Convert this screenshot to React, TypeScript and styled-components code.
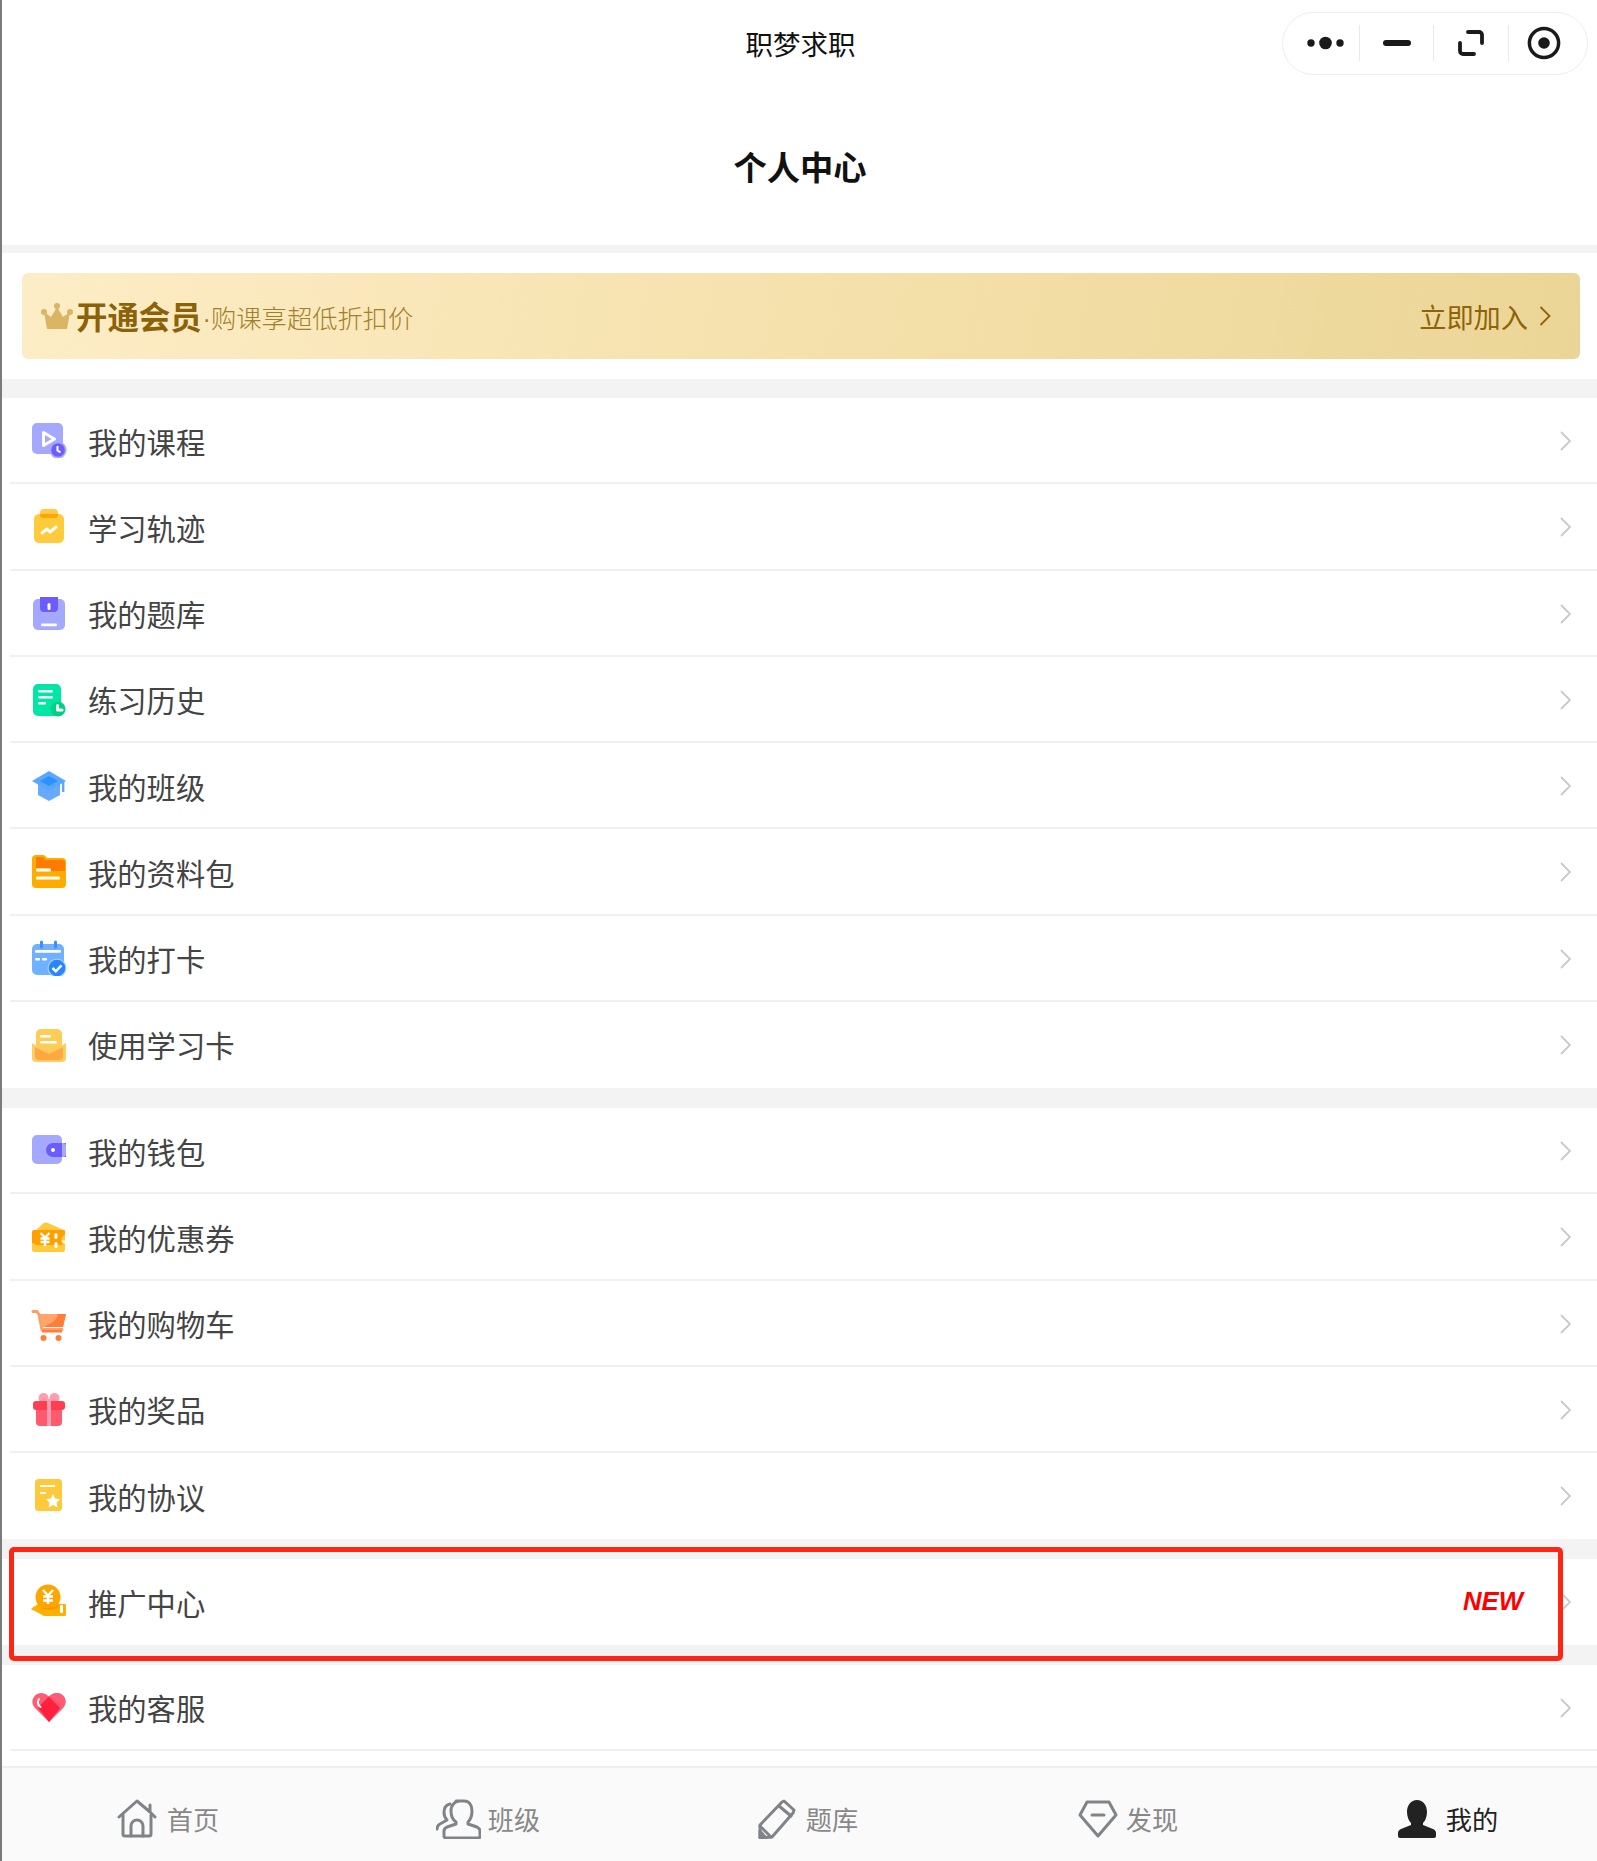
import React from "react";
import styled, { createGlobalStyle } from "styled-components";

const Global = createGlobalStyle`
  html, body { margin: 0; padding: 0; background: #fff; }
  * { box-sizing: border-box; }
`;

const Page = styled.div`
  position: relative;
  width: 1597px;
  height: 1861px;
  overflow: hidden;
  border-left: 2px solid #7b7b7b;
  background: #fff;
  font-family: "Noto Sans CJK SC", "Noto Sans", sans-serif;
  display: flex;
  flex-direction: column;
`;

const NavBar = styled.header`
  height: 86px;
  display: grid;
  grid-template-columns: 1fr auto 1fr;
  align-items: center;
`;

const NavTitle = styled.div`
  font-size: 27.5px;
  line-height: 40px;
  margin: 0 0 1px 2px;
  color: #111;
`;

const Capsule = styled.div`
  justify-self: end;
  margin: 0 9px 0 0;
  width: 306px;
  height: 63px;
  border: 1px solid #eee;
  border-radius: 32px;
  display: grid;
  grid-template-columns: 77px 74px 75px 1fr;
  align-items: center;
  background: #fff;
`;

const CapsuleCell = styled.div<{ $divider?: boolean; $pl?: number; $pr?: number }>`
  height: 36px;
  padding: 0 ${(p) => p.$pr ?? 0}px 0 ${(p) => p.$pl ?? 0}px;
  display: flex;
  align-items: center;
  justify-content: center;
  border-right: ${(p) => (p.$divider ? "1px solid #e9e9e9" : "none")};
`;

const PageTitle = styled.h1`
  margin: 0;
  height: 159px;
  padding-left: 1px;
  display: flex;
  align-items: center;
  justify-content: center;
  font-size: 33.3px;
  font-weight: 700;
  color: #111;
`;

const Band = styled.div<{ $h: number }>`
  height: ${(p) => p.$h}px;
  background: #f3f3f3;
  flex: none;
`;

const BannerWrap = styled.section`
  height: 126px;
  padding: 20px 17px 20px 20px;
`;

const Banner = styled.div`
  height: 86px;
  border-radius: 6px;
  background: linear-gradient(100deg, #fdedc6 0%, #f5e1ac 50%, #ebd596 100%);
  display: flex;
  align-items: center;
  padding: 0 29px 0 19px;
  color: #8d6407;
`;

const BannerStrong = styled.strong`
  margin: -2px 0 0 3px;
  font-size: 31.4px;
  font-weight: 700;
  color: #8b6208;
`;

const BannerSub = styled.span`
  flex: 1;
  margin-top: 1px;
  font-size: 25.3px;
  font-weight: 300;
  color: #a27f28;
`;

const BannerDot = styled.span`
  font-family: "Liberation Sans", Arial, sans-serif;
  margin: 0 0 0 1px;
`;

const BannerAction = styled.span`
  font-size: 27.2px;
  margin-right: 11px;
  color: #8d6407;
`;

const List = styled.section`
  flex: none;
`;

const Row = styled.div<{ $h?: number; $plain?: boolean }>`
  height: ${(p) => p.$h ?? 86.25}px;
  margin-left: 8px;
  padding: 0 26px 0 21px;
  display: flex;
  align-items: center;
  border-bottom: 2px solid ${(p) => (p.$plain ? "transparent" : "#f0f0f0")};
`;

const RowIcon = styled.span`
  width: 36px;
  height: 36px;
  flex: none;
  display: block;
  svg { display: block; }
`;

const RowLabel = styled.span`
  flex: 1;
  margin-left: 21px;
  font-size: 29.3px;
  line-height: 44px;
  color: #444;
  margin-top: 1px;
`;

const NewTag = styled.span`
  margin-right: 37px;
  font-family: "Liberation Sans", Arial, sans-serif;
  font-size: 25.7px;
  font-weight: 700;
  font-style: italic;
  color: #f00;
`;

const RowChevron = styled.span`
  display: block;
  margin-top: 2px;
  svg { display: block; }
`;

const Spacer = styled.div`
  height: 15.5px;
  flex: none;
`;

const TabBar = styled.nav`
  flex: 1;
  border-top: 2px solid #eee;
  background: #fafafa;
  display: grid;
  grid-template-columns: repeat(5, 320px);
  padding-left: 6px;
  align-items: center;
`;

const Tab = styled.div<{ $active?: boolean; $gap?: number }>`
  display: flex;
  align-items: center;
  justify-content: center;
  gap: ${(p) => p.$gap ?? 10}px;
  margin-top: 8px;
  font-size: 26.2px;
  line-height: 38px;
  color: ${(p) => (p.$active ? "#222" : "#888")};
  svg { display: block; }
`;

const Annotation = styled.div`
  position: absolute;
  left: 7px;
  top: 1547px;
  width: 1554px;
  height: 114px;
  border: 5px solid #ff2414;
  border-radius: 5px;
  pointer-events: none;
`;

const Chevron = ({ color = "#c9c9c9", w = 11, h = 20 }: { color?: string; w?: number; h?: number }) => (
  <svg width={w} height={h} viewBox="0 0 11 20" fill="none">
    <path d="M1 1l9 9-9 9" stroke={color} strokeWidth="1.8" />
  </svg>
);

const I = ({ children }: { children: React.ReactNode }) => (
  <svg width="36" height="36" viewBox="0 0 36 36" fill="none">{children}</svg>
);

const P = "#a5a8ff";
const V = "#6c5cff";

const icons: Record<string, React.ReactNode> = {
  course: (
    <I>
      <rect x="1" y="1" width="31" height="31" rx="5" fill={P} />
      <path d="M12.500 10.500v13l11-6.500z" stroke="#fff" strokeWidth="3" strokeLinejoin="round" />
      <circle cx="27" cy="28" r="8.600" fill={P} />
      <circle cx="27" cy="28" r="6.800" fill={V} />
      <path d="M26.500 24v4.500l3 1.800" stroke="#fff" strokeWidth="2" />
    </I>
  ),
  track: (
    <I>
      <rect x="3" y="6" width="30" height="29" rx="5" fill="#ffcb3d" />
      <path d="M9 5a4 4 0 0 1 4-4h10a4 4 0 0 1 4 4v1H9z" fill="#ffc94a" />
      <path d="M9 6h18v1a3 3 0 0 1-3 3H12a3 3 0 0 1-3-3z" fill="#ffa600" />
      <path d="M11 25l5-4 3 3 6-5" stroke="#fff" strokeWidth="3" strokeLinejoin="round" strokeLinecap="round" />
    </I>
  ),
  bank: (
    <I>
      <rect x="2" y="4" width="32" height="31" rx="5" fill={P} />
      <path d="M9 2h18v11a4 4 0 0 1-4 4H13a4 4 0 0 1-4-4z" fill={V} />
      <rect x="16.500" y="8" width="3" height="7" rx="1.500" fill="#fff" />
      <rect x="10" y="28.500" width="16" height="2.800" rx="1.200" fill="#fff" />
    </I>
  ),
  history: (
    <I>
      <rect x="2" y="3" width="28" height="32" rx="5" fill="#00e6a5" />
      <rect x="7" y="9" width="15" height="2.600" rx="1.300" fill="#fff" />
      <rect x="7" y="15" width="15" height="2.600" rx="1.300" fill="#fff" />
      <rect x="7" y="21" width="8" height="2.600" rx="1.300" fill="#fff" />
      <circle cx="27" cy="28" r="7.500" fill="#00d084" />
      <path d="M26.500 24.500v4.500h4.500" stroke="#fff" strokeWidth="3" strokeLinejoin="round" strokeLinecap="round" />
    </I>
  ),
  classes: (
    <I>
      <path d="M7 14h22v14l-11 6-11-6z" fill="#66aaff" />
      <path d="M1 14L18 4l17 10-17 10z" fill="#5aa7ff" />
      <path d="M9 14l9-5 9 5-9 5z" fill="#2e8fff" />
      <rect x="31" y="14" width="2.400" height="11" fill="#5aa7ff" />
    </I>
  ),
  folder: (
    <I>
      <path d="M1 6a4 4 0 0 1 4-4h7a3 3 0 0 1 2.500 1.300L16 5h15a4 4 0 0 1 4 4v22a4 4 0 0 1-4 4H5a4 4 0 0 1-4-4z" fill="#ffab00" />
      <path d="M5 4h7l2 3h17a3 3 0 0 1 3 3v8H20l-2-3H5z" fill="#ff7a00" />
      <rect x="5" y="15.500" width="15" height="3" rx="1" fill="#fff" />
      <rect x="5" y="23.500" width="24" height="3" rx="1" fill="#fff" />
    </I>
  ),
  calendar: (
    <I>
      <rect x="1" y="4" width="32" height="31" rx="5" fill="#6fb1ff" />
      <rect x="9" y="0.500" width="3" height="8" rx="1.500" fill="#3c8fff" />
      <rect x="23" y="0.500" width="3" height="8" rx="1.500" fill="#3c8fff" />
      <rect x="4" y="10" width="26" height="2.800" rx="1" fill="#fff" />
      <rect x="4" y="18" width="5" height="2.600" rx="1" fill="#fff" />
      <rect x="11" y="18" width="5" height="2.600" rx="1" fill="#fff" />
      <circle cx="26" cy="28" r="9.500" fill="#a9d0ff" />
      <circle cx="26" cy="28" r="8.300" fill="#2a86ff" />
      <path d="M21.500 28l3.300 3.300 5.700-6" stroke="#fff" strokeWidth="2.500" />
    </I>
  ),
  mail: (
    <I>
      <rect x="5" y="3" width="26" height="28" rx="5" fill="#ffcc55" />
      <rect x="9" y="9" width="11" height="2.600" rx="1" fill="#fff" />
      <rect x="9" y="15" width="17" height="2.600" rx="1" fill="#fff" />
      <path d="M1 17l17 10 17-10v15a4 4 0 0 1-4 4H5a4 4 0 0 1-4-4z" fill="#ffcc66" />
      <path d="M4 21l14 7 14-7v9a4 4 0 0 1-4 4H8a4 4 0 0 1-4-4z" fill="#ffa840" />
    </I>
  ),
  wallet: (
    <I>
      <rect x="1" y="3" width="30" height="29" rx="5" fill={P} />
      <path d="M22 11h13v14H22a7 7 0 0 1 0-14z" fill={V} />
      <path d="M31 11h1a3 3 0 0 1 3 3v8a3 3 0 0 1-3 3h-1z" fill={P} />
      <circle cx="22" cy="18" r="2" fill="#fff" />
    </I>
  ),
  coupon: (
    <I>
      <path d="M4 13l8-7.500q2-1.500 5-.500l17 7.500v10H4z" fill="#ffcb3d" />
      <path d="M3 12h29a2 2 0 0 1 2 2v3a4.500 4.500 0 0 0-1 8.500H1V14a2 2 0 0 1 2-2z" fill="#ffa000" />
      <path d="M1 25h31.500a4.500 4.500 0 0 0 1.500 1v6a2 2 0 0 1-2 2H3a2 2 0 0 1-2-2z" fill="#ffcb3d" />
      <path d="M1 22a5 5 0 0 0 5 5h26a4.500 4.500 0 0 1-1-2H1z" fill="#ffa000" />
      <path d="M9.500 15l4.500 4.500 4.500-4.500M14 19.500v8.500M9.500 20.500h9M9.500 24h9" stroke="#fff" strokeWidth="2.400" />
      <rect x="23.500" y="15" width="3" height="6" rx="1.500" fill="#fff" />
      <rect x="23.500" y="24" width="3" height="6" rx="1.500" fill="#fff" />
    </I>
  ),
  cart: (
    <I>
      <path d="M2 6.500h4l2 3 3 15h20" stroke="#ff9d66" strokeWidth="3" strokeLinecap="round" />
      <path d="M8 9h27l-3 13H11z" fill="#ffa46b" />
      <path d="M18 19c4-1 8-5 9-10h8l-3 13H13z" fill="#ff7d36" />
      <rect x="11" y="25" width="20" height="2.500" fill="#ff7d36" />
      <circle cx="12.500" cy="33" r="3" fill="#ff7d36" />
      <circle cx="27.500" cy="33" r="3" fill="#ff7d36" />
    </I>
  ),
  gift: (
    <I>
      <circle cx="12.500" cy="7" r="5" fill="#ff9cb0" />
      <circle cx="23.500" cy="7" r="5" fill="#ff9cb0" />
      <path d="M5 18h26v13a4 4 0 0 1-4 4H9a4 4 0 0 1-4-4z" fill="#ff5a6e" />
      <rect x="2" y="10" width="32" height="9" rx="3" fill="#ff3f50" />
      <rect x="16" y="8" width="4" height="27" fill="#ff9cb0" />
    </I>
  ),
  doc: (
    <I>
      <rect x="4" y="2" width="27" height="32" rx="3.500" fill="#ffc93c" />
      <rect x="9" y="8" width="15" height="2" fill="#fff" />
      <rect x="9" y="15" width="6" height="2" fill="#fff" />
      <path d="M22 17l2.200 4.600 5 .6-3.700 3.400 1 5-4.500-2.500-4.500 2.500 1-5-3.700-3.400 5-.6z" fill="#fff" />
    </I>
  ),
  promo: (
    <I>
      <path d="M1 25l6-4h27a1 1 0 0 1 1 1v10a1 1 0 0 1-1 1H14a4 4 0 0 1-2-.6L2 27a1 1 0 0 1-1-2z" fill="#ffb000" />
      <circle cx="17" cy="14" r="12.500" fill="#ffa500" />
      <path d="M7 21.500c3 5 16 5 20 0l1 1.500c-4 5-17 5-21-1z" fill="#ff9000" />
      <path d="M12 7l5 5.500 5-5.500M17 12.500v8.500M12 13.500h10M12 17.500h10" stroke="#fff" strokeWidth="2.500" />
      <rect x="29" y="22" width="3" height="8" rx="1" fill="#fff" />
    </I>
  ),
  heart: (
    <I>
      <path d="M18 33L4 19c-3.500-3.500-3.500-9 0-12.500 3.500-3.500 9-3.500 14 1 5-4.500 10.500-4.500 14-1 3.500 3.500 3.500 9 0 12.500z" fill="#ff5c73" />
      <path d="M18 7.500L7 18.500 18 33l11-14z" fill="#ff1f3f" />
      <path d="M29 18.500L18 7.500c5-4.500 10.500-4.500 14-1 3 3 3.300 8 .6 11.500L29 22z" fill="#ff5c73" />
      <path d="M8 10c-2 3-1 6 1.500 8" stroke="#fff" strokeWidth="2" strokeLinecap="round" />
    </I>
  ),
};

type Item = { label: string; icon: string; plain?: boolean; h?: number; isNew?: boolean };

const groupA: Item[] = [
  { label: "我的课程", icon: "course" },
  { label: "学习轨迹", icon: "track" },
  { label: "我的题库", icon: "bank" },
  { label: "练习历史", icon: "history" },
  { label: "我的班级", icon: "classes" },
  { label: "我的资料包", icon: "folder" },
  { label: "我的打卡", icon: "calendar" },
  { label: "使用学习卡", icon: "mail", plain: true },
];
const groupB: Item[] = [
  { label: "我的钱包", icon: "wallet" },
  { label: "我的优惠券", icon: "coupon" },
  { label: "我的购物车", icon: "cart" },
  { label: "我的奖品", icon: "gift" },
  { label: "我的协议", icon: "doc", plain: true },
];

const MenuRow = ({ item }: { item: Item }) => (
  <Row $plain={item.plain} $h={item.h}>
    <RowIcon>{icons[item.icon]}</RowIcon>
    <RowLabel>{item.label}</RowLabel>
    {item.isNew && <NewTag>NEW</NewTag>}
    <RowChevron><Chevron /></RowChevron>
  </Row>
);

const G = "#808488";

const tabs: { label: string; active?: boolean; gap?: number; icon: React.ReactNode }[] = [
  {
    label: "首页",
    icon: (
      <svg width="40" height="40" viewBox="0 0 40 40" fill="none" stroke={G} strokeWidth="3" strokeLinejoin="round" strokeLinecap="round">
        <path d="M2 18L20 2l13 11V6M38 18L33 13" />
        <path d="M6 16v19a2 2 0 0 0 2 2h24a2 2 0 0 0 2-2V16" />
        <path d="M14 37V27a6 6 0 0 1 12 0v10" />
      </svg>
    ),
  },
  {
    label: "班级",
    gap: 7,
    icon: (
      <svg width="45" height="40" viewBox="0 0 45 40" fill="none" stroke={G} strokeWidth="3" strokeLinejoin="round" strokeLinecap="round">
        <path d="M20 2h8c5 0 8 4 8 10 0 5-2 9-4 11v2l9 3c2 1 3 2 3 4v5a2 2 0 0 1-2 2H10a2 2 0 0 1-2-2v-5c0-2 1-3 3-4l9-3v-2c-3-2-5-6-5-11 0-6 4-10 9-10z" />
        <path d="M14 5c-4 1-6 4-6 8 0 3 1 6 3 8l-7 4c-2 1-3 3-3 5" />
      </svg>
    ),
  },
  {
    label: "题库",
    icon: (
      <svg width="38" height="40" viewBox="0 0 38 40" fill="none" stroke={G} strokeWidth="3" strokeLinejoin="round" strokeLinecap="round">
        <path d="M2 26L24 3l2-1 10 9-1 3-21 24-12 1z" />
        <path d="M21 7l12 10M2 27l11 11" />
        <path d="M2 32l5 6H2z" fill={G} />
      </svg>
    ),
  },
  {
    label: "发现",
    gap: 8,
    icon: (
      <svg width="40" height="38" viewBox="0 0 40 38" fill="none" stroke={G} strokeWidth="3" strokeLinejoin="round" strokeLinecap="round">
        <path d="M9 2h22l7 13-18 21L2 15z" />
        <path d="M14 15h12" />
      </svg>
    ),
  },
  {
    label: "我的",
    active: true,
    icon: (
      <svg width="38" height="40" viewBox="0 0 38 40" fill="#222">
        <path d="M19 1c6 0 10 5 10 12 0 5-2 9-4 11v2l10 4c2 1 3 2 3 4v3a2 2 0 0 1-2 2H2a2 2 0 0 1-2-2v-3c0-2 1-3 3-4l10-4v-2c-2-2-4-6-4-11C9 6 13 1 19 1z" />
      </svg>
    ),
  },
];

export default function App() {
  return (
    <Page>
      <Global />
      <NavBar>
        <span />
        <NavTitle>职梦求职</NavTitle>
        <Capsule>
          <CapsuleCell $divider $pl={8}>
            <svg width="37" height="14" viewBox="0 0 37 14" fill="#1a1a1a">
              <circle cx="4" cy="7" r="3.700" />
              <circle cx="18.500" cy="7" r="6.300" />
              <circle cx="33" cy="7" r="3.700" />
            </svg>
          </CapsuleCell>
          <CapsuleCell $divider>
            <svg width="28" height="8" viewBox="0 0 28 8"><rect width="28" height="6" y="1" rx="3" fill="#1a1a1a" /></svg>
          </CapsuleCell>
          <CapsuleCell $divider>
            <svg width="28" height="28" viewBox="0 0 28 28" fill="none" stroke="#1a1a1a" strokeWidth="3.800" strokeLinecap="round">
              <path d="M11 3h11a3 3 0 0 1 3 3v8" />
              <path d="M3 14v8a3 3 0 0 0 3 3h11" />
            </svg>
          </CapsuleCell>
          <CapsuleCell $pr={8}>
            <svg width="34" height="34" viewBox="0 0 34 34">
              <circle cx="17" cy="17" r="14.600" fill="none" stroke="#1a1a1a" strokeWidth="3.500" />
              <circle cx="17" cy="17" r="5.800" fill="#1a1a1a" />
            </svg>
          </CapsuleCell>
        </Capsule>
      </NavBar>
      <PageTitle>个人中心</PageTitle>
      <Band $h={8} />
      <BannerWrap>
        <Banner>
          <svg width="32" height="26" viewBox="0 0 32 26" fill="#d9b565">
            <circle cx="16" cy="3" r="3" />
            <circle cx="3" cy="9" r="3" />
            <circle cx="29" cy="9" r="3" />
            <path d="M16 4l6 10 7-5-3 17H6L3 9l7 5z" />
          </svg>
          <BannerStrong>开通会员</BannerStrong>
          <BannerSub><BannerDot>·</BannerDot>购课享超低折扣价</BannerSub>
          <BannerAction>立即加入</BannerAction>
          <Chevron color="#8d6407" w={12} h={20} />
        </Banner>
      </BannerWrap>
      <Band $h={19} />
      <List>{groupA.map((i) => <MenuRow key={i.label} item={i} />)}</List>
      <Band $h={20} />
      <List>{groupB.map((i) => <MenuRow key={i.label} item={i} />)}</List>
      <Band $h={19.75} />
      <List><MenuRow item={{ label: "推广中心", icon: "promo", plain: true, h: 86, isNew: true }} /></List>
      <Band $h={20} />
      <List><MenuRow item={{ label: "我的客服", icon: "heart", h: 85.75 }} /></List>
      <Spacer />
      <TabBar>
        {tabs.map((t) => (
          <Tab key={t.label} $active={t.active} $gap={t.gap}>
            {t.icon}
            <span>{t.label}</span>
          </Tab>
        ))}
      </TabBar>
      <Annotation />
    </Page>
  );
}
